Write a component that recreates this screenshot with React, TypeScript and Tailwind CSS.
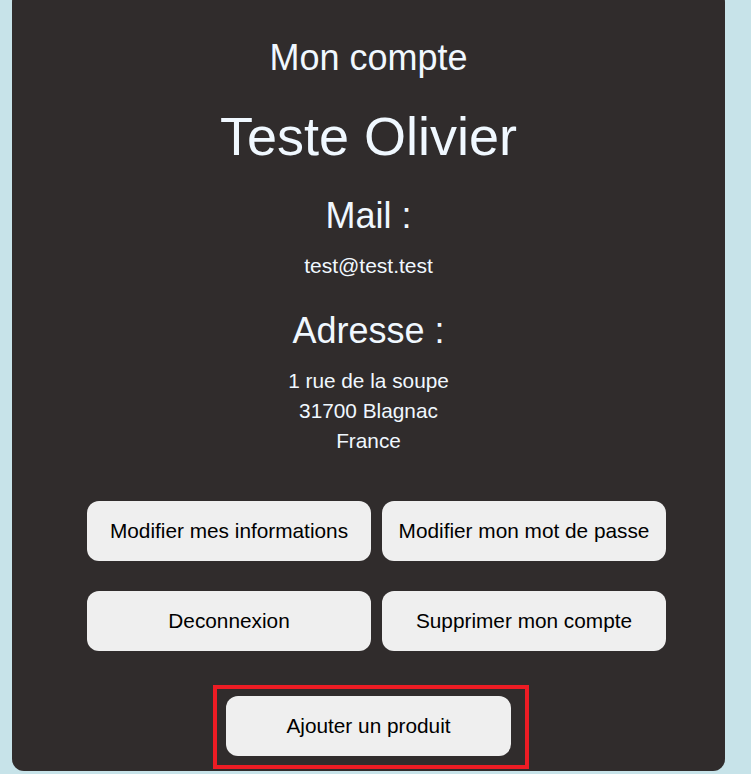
import React from 'react';

const actions = [
  'Modifier mes informations',
  'Modifier mon mot de passe',
  'Deconnexion',
  'Supprimer mon compte',
];

const AccountCard: React.FC = () => {
  return (
    <div className="ml-[12px] mt-[-10px] mb-[3px] w-[713px] rounded-[12px] bg-[#302c2c] pt-[50px] pb-[2px] text-[#f0f8ff] flex flex-col items-center text-center">
      <h2 className="text-[36px] leading-none">Mon compte</h2>
      <h1 className="mt-[33px] text-[54px] leading-none">Teste Olivier</h1>

      <h3 className="mt-[35px] text-[36px] leading-none">Mail :</h3>
      <p className="mt-[21px] text-[21px] leading-none">test@test.test</p>

      <h3 className="mt-[37px] text-[36px] leading-none">Adresse :</h3>
      <div className="mt-[17px] text-[20.8px] leading-[30px]">
        <p>1 rue de la soupe</p>
        <p>31700 Blagnac</p>
        <p>France</p>
      </div>

      <div className="mt-[45px] self-start ml-[75px] grid grid-cols-[284px_284px] gap-x-[11px] gap-y-[30px]">
        {actions.map((label) => (
          <button
            key={label}
            className="h-[60px] rounded-[12px] bg-[#efefef] text-[20.8px] text-black"
          >
            {label}
          </button>
        ))}
      </div>

      {/* highlighted action */}
      <div className="mt-[34px] self-start ml-[201px] border-4 border-[#ed1c24] pl-[9px] pr-[14px] pt-[7px] pb-[9px]">
        <button className="block w-[285px] h-[60px] rounded-[12px] bg-[#efefef] text-[20.8px] text-black">
          Ajouter un produit
        </button>
      </div>
    </div>
  );
};

export default function App() {
  return (
    <div
      className="min-h-screen w-full overflow-hidden bg-[#c7e3e9]"
      style={{ fontFamily: '"Liberation Sans", Arial, sans-serif' }}
    >
      <AccountCard />
    </div>
  );
}
